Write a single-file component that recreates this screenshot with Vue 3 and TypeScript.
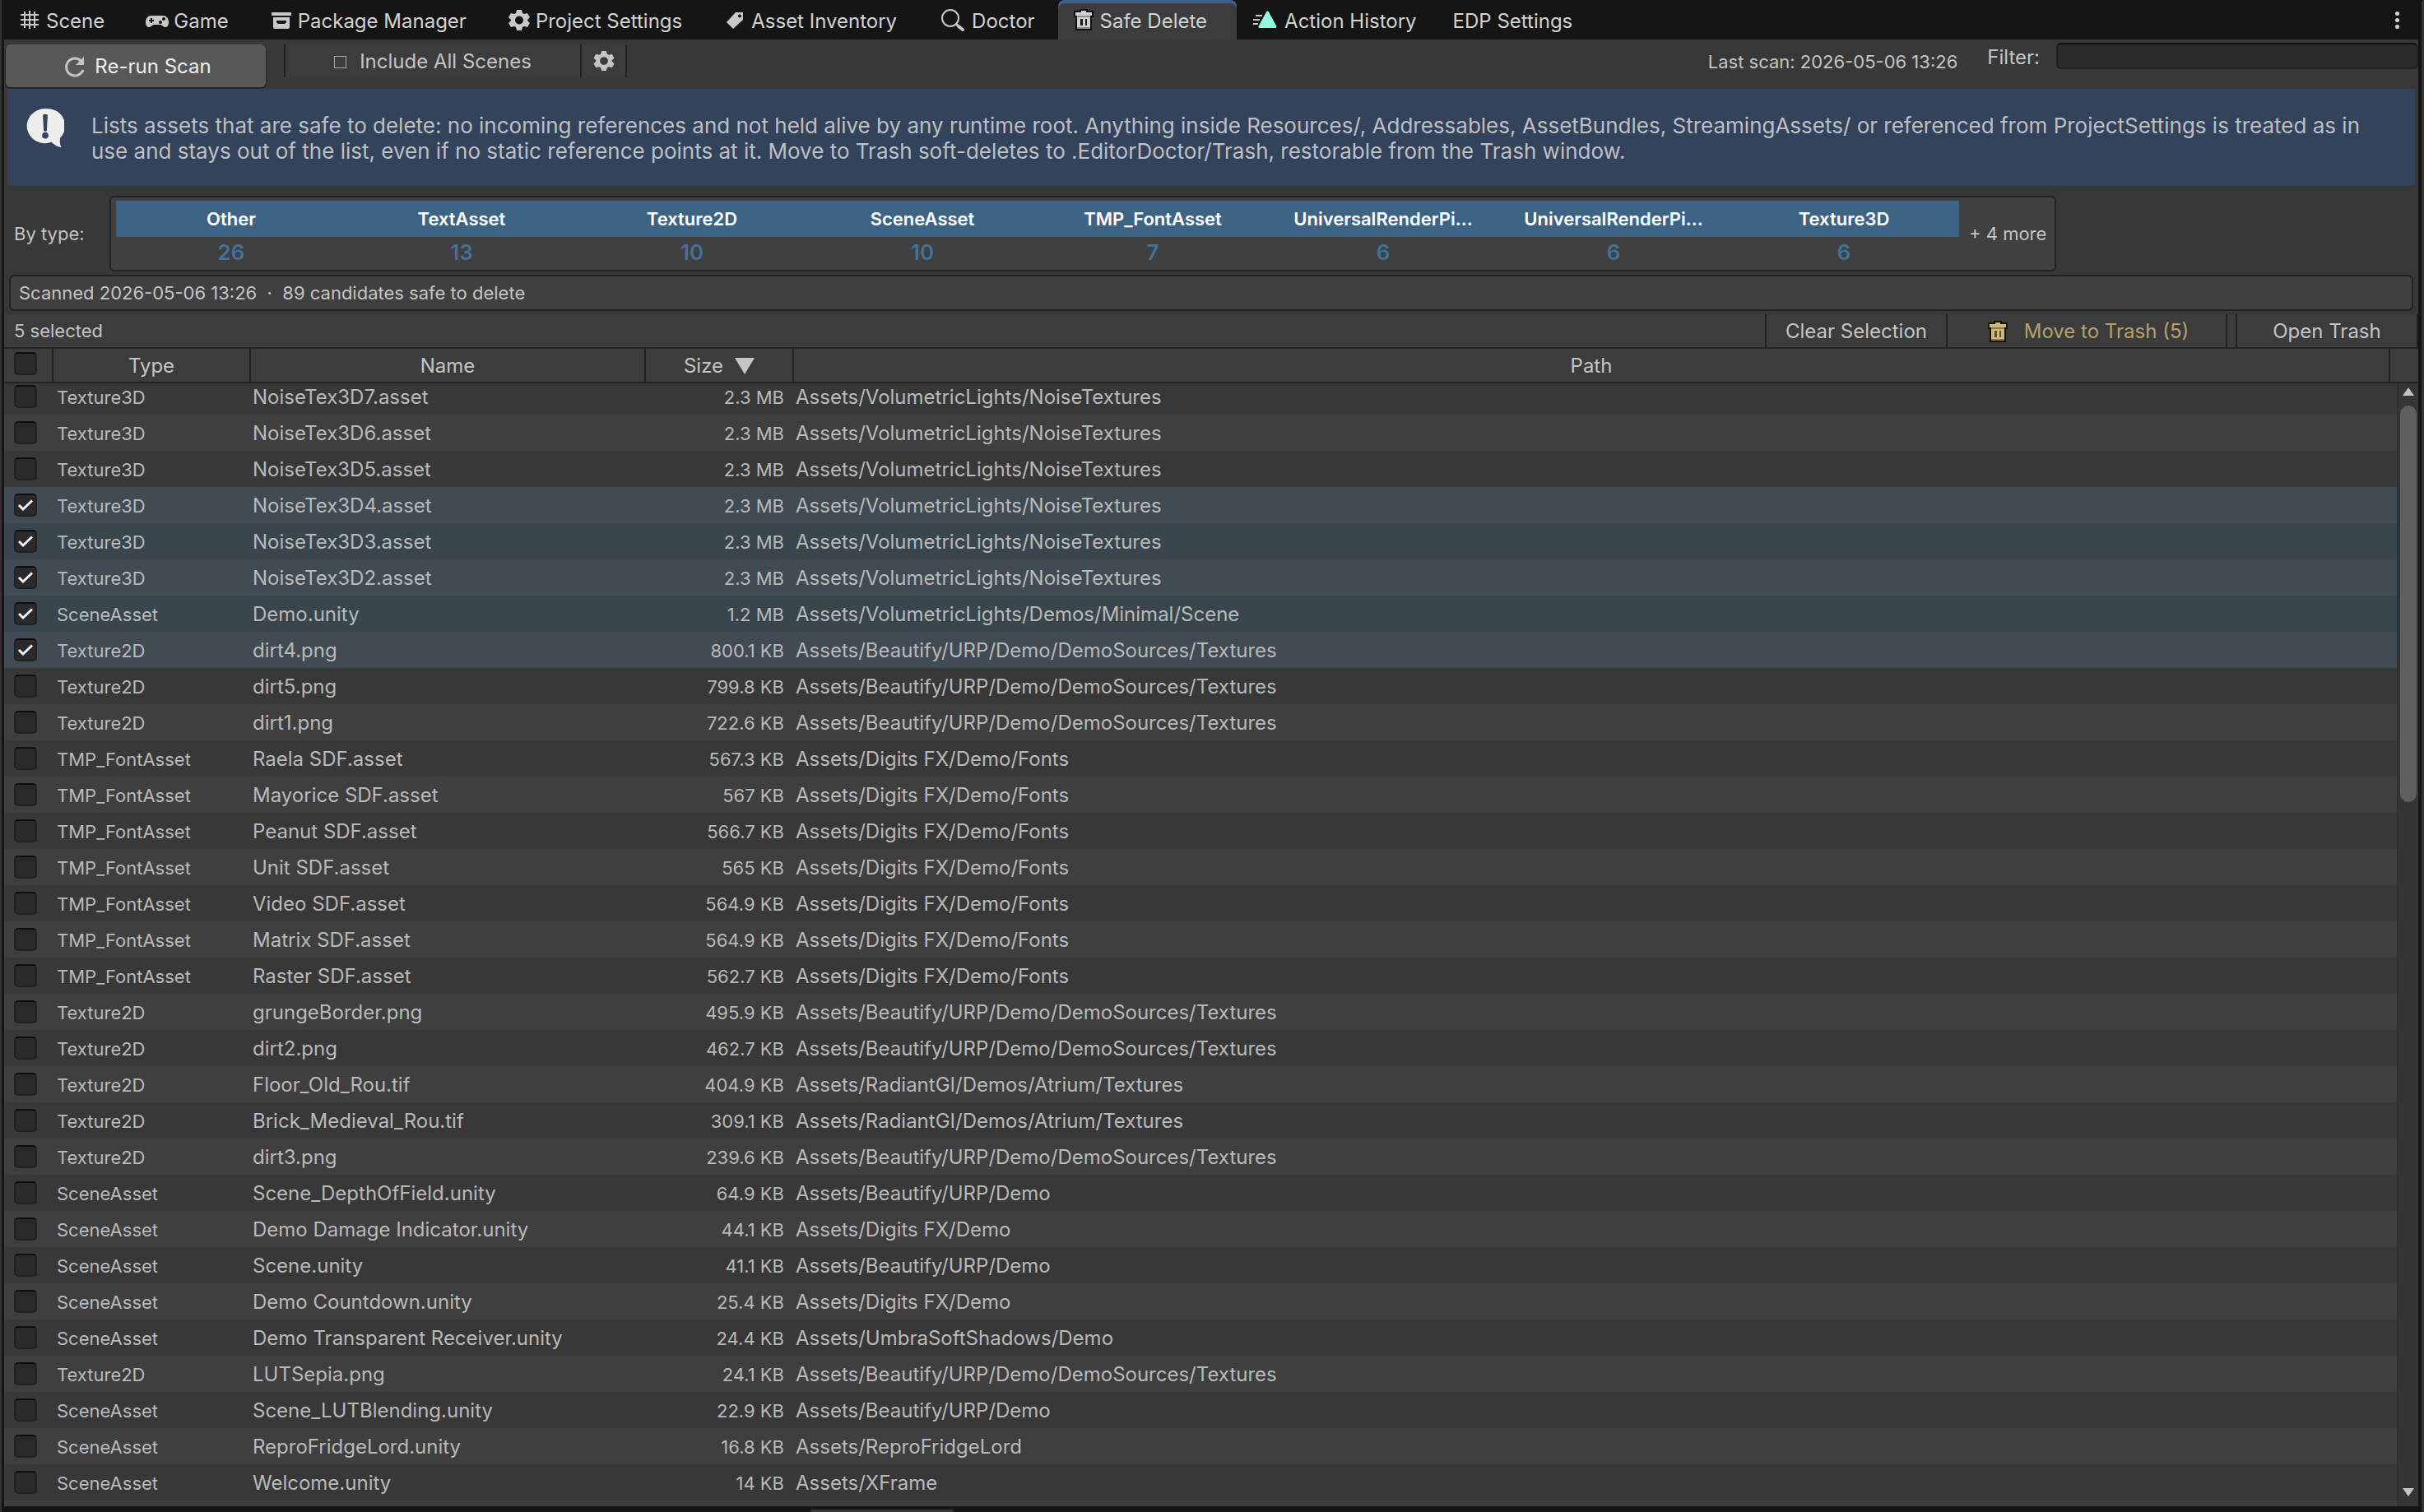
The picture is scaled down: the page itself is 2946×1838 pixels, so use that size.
<script setup lang="ts">
import { computed, onMounted, ref } from 'vue'

interface Tab { label: string; icon?: string; active?: boolean; wide?: boolean }
interface TypeCount { name: string; count: number }
interface Asset { type: string; name: string; size: string; path: string; selected: boolean }

const tabs: Tab[] = [
  { label: 'Scene', icon: 'grid' },
  { label: 'Game', icon: 'gamepad' },
  { label: 'Package Manager', icon: 'package' },
  { label: 'Project Settings', icon: 'gear' },
  { label: 'Asset Inventory', icon: 'tag' },
  { label: 'Doctor', icon: 'search', wide: true },
  { label: 'Safe Delete', icon: 'trash', active: true },
  { label: 'Action History', icon: 'history', wide: true },
  { label: 'EDP Settings' },
]

const typeCounts: TypeCount[] = [
  { name: 'Other', count: 26 },
  { name: 'TextAsset', count: 13 },
  { name: 'Texture2D', count: 10 },
  { name: 'SceneAsset', count: 10 },
  { name: 'TMP_FontAsset', count: 7 },
  { name: 'UniversalRenderPi...', count: 6 },
  { name: 'UniversalRenderPi...', count: 6 },
  { name: 'Texture3D', count: 6 },
]

const noise = 'Assets/VolumetricLights/NoiseTextures'
const dirt = 'Assets/Beautify/URP/Demo/DemoSources/Textures'
const fonts = 'Assets/Digits FX/Demo/Fonts'
const atrium = 'Assets/RadiantGI/Demos/Atrium/Textures'

const source: [string, string, string, string][] = [
  ['Texture3D', 'NoiseTex3D7.asset', '2.3 MB', noise],
  ['Texture3D', 'NoiseTex3D6.asset', '2.3 MB', noise],
  ['Texture3D', 'NoiseTex3D5.asset', '2.3 MB', noise],
  ['Texture3D', 'NoiseTex3D4.asset', '2.3 MB', noise],
  ['Texture3D', 'NoiseTex3D3.asset', '2.3 MB', noise],
  ['Texture3D', 'NoiseTex3D2.asset', '2.3 MB', noise],
  ['SceneAsset', 'Demo.unity', '1.2 MB', 'Assets/VolumetricLights/Demos/Minimal/Scene'],
  ['Texture2D', 'dirt4.png', '800.1 KB', dirt],
  ['Texture2D', 'dirt5.png', '799.8 KB', dirt],
  ['Texture2D', 'dirt1.png', '722.6 KB', dirt],
  ['TMP_FontAsset', 'Raela SDF.asset', '567.3 KB', fonts],
  ['TMP_FontAsset', 'Mayorice SDF.asset', '567 KB', fonts],
  ['TMP_FontAsset', 'Peanut SDF.asset', '566.7 KB', fonts],
  ['TMP_FontAsset', 'Unit SDF.asset', '565 KB', fonts],
  ['TMP_FontAsset', 'Video SDF.asset', '564.9 KB', fonts],
  ['TMP_FontAsset', 'Matrix SDF.asset', '564.9 KB', fonts],
  ['TMP_FontAsset', 'Raster SDF.asset', '562.7 KB', fonts],
  ['Texture2D', 'grungeBorder.png', '495.9 KB', dirt],
  ['Texture2D', 'dirt2.png', '462.7 KB', dirt],
  ['Texture2D', 'Floor_Old_Rou.tif', '404.9 KB', atrium],
  ['Texture2D', 'Brick_Medieval_Rou.tif', '309.1 KB', atrium],
  ['Texture2D', 'dirt3.png', '239.6 KB', dirt],
  ['SceneAsset', 'Scene_DepthOfField.unity', '64.9 KB', 'Assets/Beautify/URP/Demo'],
  ['SceneAsset', 'Demo Damage Indicator.unity', '44.1 KB', 'Assets/Digits FX/Demo'],
  ['SceneAsset', 'Scene.unity', '41.1 KB', 'Assets/Beautify/URP/Demo'],
  ['SceneAsset', 'Demo Countdown.unity', '25.4 KB', 'Assets/Digits FX/Demo'],
  ['SceneAsset', 'Demo Transparent Receiver.unity', '24.4 KB', 'Assets/UmbraSoftShadows/Demo'],
  ['Texture2D', 'LUTSepia.png', '24.1 KB', dirt],
  ['SceneAsset', 'Scene_LUTBlending.unity', '22.9 KB', 'Assets/Beautify/URP/Demo'],
  ['SceneAsset', 'ReproFridgeLord.unity', '16.8 KB', 'Assets/ReproFridgeLord'],
  ['SceneAsset', 'Welcome.unity', '14 KB', 'Assets/XFrame'],
]

const assets = ref<Asset[]>(
  source.map(([type, name, size, path], i) => ({ type, name, size, path, selected: i >= 3 && i <= 7 })),
)
const selectedCount = computed(() => assets.value.filter((a) => a.selected).length)
const filter = ref('')

const scroller = ref<HTMLElement | null>(null)
onMounted(() => {
  if (scroller.value) scroller.value.scrollTop = 6
})
</script>

<template>
  <div class="window">
    <div class="edge edge-left"></div>
    <main class="panel">
      <nav class="tabs" role="tablist">
        <button v-for="tab in tabs" :key="tab.label" class="tab" :class="{ active: tab.active, wide: tab.wide, plain: !tab.icon }" role="tab" :aria-selected="!!tab.active">
          <svg v-if="tab.icon" class="tab-icon" viewBox="0 0 32 32" aria-hidden="true">
            <g v-if="tab.icon === 'grid'" stroke="#c8c8c8" stroke-width="2" fill="none">
              <path d="M10 7v20M16 6v22M22 7v20M5 11h22M5 17h22M5 23h22" />
            </g>
            <g v-else-if="tab.icon === 'gamepad'">
              <path d="M9 12h14c4 0 7 3 7 8 0 4-2 6-4 6-3 0-4-3-6-3h-8c-2 0-3 3-6 3-2 0-4-2-4-6 0-5 3-8 7-8z" fill="#c8c8c8" />
              <path d="M9 15v6M6 18h6" stroke="#151515" stroke-width="2" />
              <circle cx="24" cy="16" r="2" fill="#151515" /><circle cx="20" cy="20" r="2" fill="#151515" />
            </g>
            <g v-else-if="tab.icon === 'package'" fill="#c8c8c8">
              <rect x="4" y="8" width="24" height="4" rx="1" />
              <path fill-rule="evenodd" d="M6 14h20v12q0 2-2 2H8q-2 0-2-2zM10 18v1q0 3 3 3h6q3 0 3-3v-1z" />
            </g>
            <path v-else-if="tab.icon === 'gear'" fill="#c8c8c8" fill-rule="evenodd" d="M13 5h6l1 4 2 1 4-1 3 5-3 3v1l3 3-3 5-4-1-2 1-1 4h-6l-1-4-2-1-4 1-3-5 3-3v-1l-3-3 3-5 4 1 2-1zM16 12.500a5 5 0 1 0 .01 0z" />
            <path v-else-if="tab.icon === 'tag'" fill="#c8c8c8" fill-rule="evenodd" d="M17 8h9v9L14 28 6 20zM22 10.500a2 2 0 1 0 .01 0z" />
            <g v-else-if="tab.icon === 'search'" fill="none" stroke="#c8c8c8">
              <circle cx="13" cy="15" r="10" stroke-width="2" />
              <path d="M20 22l3 3" stroke-width="3" /><path d="M23 25l5 4" stroke-width="4" stroke-linecap="round" />
            </g>
            <g v-else-if="tab.icon === 'trash'" shape-rendering="crispEdges">
              <path d="M11 4h10v2h7v8h-2v16H6V14H4V6h7z" fill="#101010" />
              <path d="M13 6h6v2h7v4H6V8h7zM8 14h16v14H8z" fill="#cfcfcf" />
              <path d="M8 12h16v2H8zM8 26h16v2H8z" fill="#8c8c8c" />
              <path d="M12 16h3v8h-3zM18 16h2v8h-2z" fill="#151515" />
            </g>
            <g v-else>
              <path d="M4 12h8M1 17h8M1 22h6" stroke="#c8c8c8" stroke-width="2" />
              <path d="M18.500 8L28 25.500H9z" fill="#93fae0" stroke="#93fae0" stroke-width="3" stroke-linejoin="round" />
            </g>
          </svg>
          <span>{{ tab.label }}</span>
        </button>
        <button class="menu" aria-label="Window menu"><i></i><i></i><i></i></button>
      </nav>

      <div class="toolbar">
        <button class="rerun">
          <svg width="28" height="28" viewBox="0 0 28 28" aria-hidden="true">
            <path d="M22 7.500A10.500 10.500 0 1 0 24 18" fill="none" stroke="#c4c4c4" stroke-width="3" />
            <path d="M25 2v10H15z" fill="#c4c4c4" />
          </svg>
          <span>Re-run Scan</span>
        </button>
        <button class="flat scenes"><span class="box"></span><span>Include All Scenes</span></button>
        <button class="flat options" aria-label="Options">
          <svg width="28" height="28" viewBox="2 3 28 29" aria-hidden="true">
            <path fill="#c4c4c4" fill-rule="evenodd" d="M13 5h6l1 4 2 1 4-1 3 5-3 3v1l3 3-3 5-4-1-2 1-1 4h-6l-1-4-2-1-4 1-3-5 3-3v-1l-3-3 3-5 4 1 2-1zM16 12.500a5 5 0 1 0 .01 0z" />
          </svg>
        </button>
        <span class="last-scan">Last scan: 2026-05-06 13:26</span>
        <label class="filter-label" for="filter">Filter:</label>
        <input id="filter" v-model="filter" class="filter" type="text" />
      </div>

      <section class="info">
        <svg class="info-icon" width="46" height="50" viewBox="0 0 48 52" aria-hidden="true">
          <path d="M24 1a23 22 0 1 0 8 42.500q6 6 12.500 6.500-3-4-1.500-12A23 22 0 0 0 24 1z" fill="#eeeeee" />
          <path d="M21 9q3-2 6 0l-1 20q-2 2-4 0z" fill="#33435b" />
          <circle cx="24" cy="35" r="4" fill="#33435b" />
        </svg>
        <p>Lists assets that are safe to delete: no incoming references and not held alive by any runtime root. Anything inside Resources/, Addressables, AssetBundles, StreamingAssets/ or referenced from ProjectSettings is treated as in use and stays out of the list, even if no static reference points at it. Move to Trash soft-deletes to .EditorDoctor/Trash, restorable from the Trash window.</p>
      </section>

      <section class="by-type">
        <span class="by-type-label">By type:</span>
        <div class="chips">
          <div v-for="(t, i) in typeCounts" :key="i" class="chip">
            <div class="chip-name">{{ t.name }}</div>
            <div class="chip-count">{{ t.count }}</div>
          </div>
          <span class="more">+ 4 more</span>
        </div>
      </section>

      <div class="status">Scanned 2026-05-06 13:26 &nbsp;·&nbsp; 89 candidates safe to delete</div>

      <div class="selection">
        <span class="selected-count">{{ selectedCount }} selected</span>
        <button class="flat action">Clear Selection</button>
        <button class="flat action trash">
          <svg width="24" height="26" viewBox="4 4 24 26" shape-rendering="crispEdges" aria-hidden="true">
            <path d="M11 4h10v2h7v8h-2v16H6V14H4V6h7z" fill="#17140c" />
            <path d="M13 6h6v2h7v4H6V8h7zM8 14h16v14H8z" fill="#cfb67a" />
            <path d="M8 12h16v2H8zM8 26h16v2H8z" fill="#8c784a" />
            <path d="M12 16h3v8h-3zM18 16h2v8h-2z" fill="#5c4d2b" />
          </svg>
          <span>Move to Trash ({{ selectedCount }})</span>
        </button>
        <button class="flat action last">Open Trash</button>
      </div>

      <div class="list">
        <div ref="scroller" class="scroller">
          <table>
            <colgroup>
              <col class="c-check" /><col class="c-type" /><col class="c-name" /><col class="c-size" /><col /><col class="c-end" />
            </colgroup>
            <thead>
              <tr>
                <th class="check"><input type="checkbox" aria-label="Select all" /></th>
                <th>Type</th>
                <th>Name</th>
                <th>
                  <span class="sort">Size
                    <svg width="24" height="20" viewBox="0 0 24 20" aria-hidden="true"><path d="M0 0h24L12 20z" fill="#c4c4c4" /></svg>
                  </span>
                </th>
                <th>Path</th>
                <th></th>
              </tr>
            </thead>
            <tbody>
              <tr v-for="asset in assets" :key="asset.name" :class="{ selected: asset.selected }">
                <td class="check"><input v-model="asset.selected" type="checkbox" :aria-label="asset.name" /></td>
                <td class="type">{{ asset.type }}</td>
                <td>{{ asset.name }}</td>
                <td class="size">{{ asset.size }}</td>
                <td colspan="2">{{ asset.path }}</td>
              </tr>
              <tr><td colspan="6"></td></tr>
            </tbody>
          </table>
        </div>
        <div class="scrollbar" aria-hidden="true">
          <svg width="14" height="10" viewBox="0 0 14 10"><path d="M0 10h14L7 0z" fill="#c4c4c4" /></svg>
          <div class="track"><div class="thumb"></div></div>
          <svg width="14" height="10" viewBox="0 0 14 10"><path d="M0 0h14L7 10z" fill="#c4c4c4" /></svg>
        </div>
      </div>
      <div class="bottom"><div class="next-panel"></div></div>
    </main>
    <div class="edge edge-right"></div>
  </div>
</template>

<style>
body { background: #151515; }
</style>

<style scoped>
.window, .window * { box-sizing: border-box; }
.window {
  display: flex;
  height: 100vh;
  background: #151515;
  color: #c4c4c4;
  font-family: Inter, "Liberation Sans", sans-serif;
  font-size: 24px;
  line-height: 30px;
}
.edge { background: #333333; flex: none; }
.edge-left { width: 2px; }
.edge-right { width: 3px; border-radius: 6px 0 0 0; }
.panel { flex: 1; min-width: 0; display: flex; flex-direction: column; margin: 0 4px 0 3px; background: #383838; }
button { font: inherit; color: inherit; border: 0; margin: 0; padding: 0; background: none; white-space: nowrap; }

.tabs { display: flex; flex: none; height: 48px; background: #151515; color: #d2d2d2; }
.tab { display: flex; align-items: center; gap: 4px; padding: 4px 33px 0 15px; }
.tab.wide { gap: 7px; padding-left: 19px; padding-right: 28px; }
.tab.plain { padding-left: 16px; }
.tab.active { padding-right: 36px; background: #3c3c3c; border-radius: 8px 8px 0 0; box-shadow: inset 0 4px 0 #3a6289; }
.tab-icon { width: 32px; height: 32px; margin-bottom: 6px; }
.menu { display: flex; flex-direction: column; align-items: center; justify-content: center; gap: 3px; width: 40px; margin-left: auto; margin-right: 6px; }
.menu i { width: 5px; height: 5px; border-radius: 50%; background: #d2d2d2; }

.toolbar { display: flex; flex: none; align-items: flex-start; height: 60px; padding: 6px 0 0 2px; }
.rerun { display: flex; align-items: center; justify-content: center; gap: 10px; width: 316px; height: 52px; margin-right: 22px; padding: 2px 0 0 4px; border-radius: 6px; background: #585858; color: #eeeeee; box-shadow: 0 1px 0 1px #262626; }
.flat { display: flex; align-items: center; justify-content: center; height: 40px; border-left: 2px solid #232323; background: #3c3c3c; }
.scenes { width: 360px; gap: 16px; padding-top: 2px; }
.box { width: 15px; height: 15px; border: 1px solid #a8a8a8; }
.options { width: 57px; border-right: 2px solid #232323; }
.last-scan { margin-left: auto; padding-top: 6px; font-size: 22px; }
.filter-label { margin: 1px 20px 0 36px; }
.filter { width: 440px; height: 32px; margin-top: -2px; padding: 0 8px; font: inherit; color: inherit; background: #2a2a2a; border: 2px solid #212121; border-top-color: #0d0d0d; border-radius: 6px; outline: none; }

.info { display: flex; flex: none; align-items: flex-start; height: 118px; margin: 0 4px; padding: 23px 40px 0 23px; background: #33435b; color: #bdbfc2; }
.info-icon { flex: none; margin-right: 33px; }
.info p { margin: 6px 0 0; font-size: 26px; line-height: 31px; }

.by-type { display: flex; flex: none; align-items: center; margin-top: 12px; padding-left: 12px; font-size: 22px; }
.by-type-label { width: 116px; }
.chips { display: flex; height: 92px; padding: 4px 10px 0 6px; border: 2px solid #232323; border-radius: 6px; background: #404040; }
.chip { width: 280px; text-align: center; }
.chip-name { height: 44px; line-height: 44px; background: #3e6485; color: #ffffff; font-weight: 600; }
.chip-count { padding-top: 4px; color: #44709c; font-size: 26px; font-weight: 600; line-height: 30px; }
.more { align-self: center; margin: 0 0 4px 12px; }

.status { flex: none; height: 44px; margin: 4px 6px; padding: 0 10px; border: 2px solid #232323; border-radius: 6px; background: #404040; font-size: 22px; line-height: 40px; }

.selection { display: flex; flex: none; height: 42px; border-bottom: 2px solid #232323; background: #3c3c3c; }
.selected-count { flex: 1; padding-left: 12px; font-size: 22px; line-height: 40px; }
.action { width: 220px; padding-top: 2px; }
.action.trash { width: 342px; gap: 20px; padding-left: 4px; border-right: 2px solid #232323; color: #b5a06d; margin-right: 10px; }
.action.last { width: 222px; border-right: 2px solid #232323; }

.list { position: relative; flex: 1; min-height: 0; }
.scroller { height: 100%; overflow-y: auto; scrollbar-width: none; }
table { width: 100%; table-layout: fixed; border-collapse: separate; border-spacing: 0; }
.c-check { width: 60px; }
.c-type { width: 240px; }
.c-name { width: 480px; }
.c-size { width: 180px; }
.c-end { width: 34px; }
th { position: sticky; top: 0; z-index: 1; height: 42px; padding: 2px 0 0; background: #3c3c3c; border-right: 2px solid #232323; border-bottom: 2px solid #232323; font-weight: 400; text-align: center; }
th:last-child { border-right: 0; }
.sort { display: inline-flex; align-items: center; gap: 14px; }
td { height: 44px; padding: 2px 2px 0; color: #b9b9b9; white-space: nowrap; }
tbody tr:nth-child(even) { background: #3f3f3f; }
tbody tr.selected { background: #3a464d; }
tbody tr.selected:nth-child(even) { background: #414b53; }
.type { padding-left: 4px; font-size: 22px; }
.size { padding-right: 12px; font-size: 22px; text-align: right; }
.check { padding: 0 0 0 12px; text-align: left; }
th.check { padding-bottom: 4px; }
.check input { display: block; width: 28px; height: 28px; margin: 0; appearance: none; border: 2px solid #212121; border-top-color: #0d0d0d; border-radius: 5px; background: #2a2a2a; background-origin: border-box; }
.check input:checked { background-image: url("data:image/svg+xml,%3Csvg xmlns='http://www.w3.org/2000/svg' viewBox='0 0 28 28'%3E%3Cpath d='M6 14l5 5L22 8.500' fill='none' stroke='%23f0f0f0' stroke-width='3'/%3E%3C/svg%3E"); }

.scrollbar { position: absolute; top: 42px; right: 0; bottom: 0; width: 26px; display: flex; flex-direction: column; align-items: center; gap: 12px; padding: 5px 0 12px; background: #353535; border-left: 2px solid #303030; }
.track { flex: 1; width: 20px; }
.thumb { height: 37%; border-radius: 10px; background: #5e5e5e; }
.bottom { flex: none; height: 7px; padding: 4px 0 0 980px; background: #151515; }
.next-panel { width: 174px; height: 3px; border-radius: 3px 3px 0 0; background: #383838; }
</style>
